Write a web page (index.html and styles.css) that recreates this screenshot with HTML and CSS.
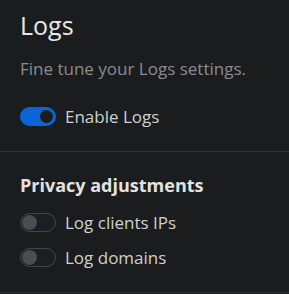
FILE: index.html
```html
<!DOCTYPE html>
<html lang="en">
<head>
    <meta charset="UTF-8">
    <meta name="viewport" content="width=device-width, initial-scale=1.0">
    <title>Logs</title>
    <link rel="stylesheet" href="styles.css">
</head>
<body>
    <div class="section">
        <h1>Logs</h1>
        <p class="sub">Fine tune your Logs settings.</p>
        <label class="row">
            <input type="checkbox" class="switch" checked>
            <span>Enable Logs</span>
        </label>
    </div>

    <div class="section second">
        <h2>Privacy adjustments</h2>
        <label class="row">
            <input type="checkbox" class="switch">
            <span>Log clients IPs</span>
        </label>
        <label class="row">
            <input type="checkbox" class="switch">
            <span>Log domains</span>
        </label>
    </div>
</body>
</html>
```

FILE: styles.css
```css
body {
    margin: 0;
    padding: 0;
    background: #1b1c1e;
    color: #d4d4d4;
    font-family: "Open Sans", "Noto Sans", sans-serif;
    font-size: 17px;
    overflow: hidden;
}

.section {
    padding: 10px 20px 22px;
    border-bottom: 1px solid #2f3033;
}

.section.second {
    padding-top: 22px;
    padding-bottom: 22px;
}

h1 {
    margin: 0;
    font-size: 25px;
    font-weight: 400;
    line-height: 30px;
    color: #e8e8e8;
}

h2 {
    margin: 0 0 15px;
    font-size: 18px;
    font-weight: 700;
    line-height: 22px;
    color: #e2e2e2;
}

.sub {
    margin: 17px 0 24px;
    line-height: 24px;
    color: #8b8c8e;
}

.row {
    display: flex;
    align-items: center;
    gap: 9px;
    line-height: 24px;
    color: #d0d0d0;
}

.row + .row {
    margin-top: 11px;
}

.switch {
    appearance: none;
    -webkit-appearance: none;
    margin: 0 0 2px;
    width: 36px;
    height: 19px;
    box-sizing: border-box;
    border-radius: 10px;
    border: 1px solid #45474a;
    background: #1d1e21;
    position: relative;
    cursor: pointer;
}

.switch::after {
    content: "";
    position: absolute;
    top: 1px;
    left: 1px;
    width: 15px;
    height: 15px;
    border-radius: 50%;
    background: #4b4d51;
}

.switch:checked {
    background: #0b64d8;
    border-color: #0b64d8;
}

.switch:checked::after {
    left: auto;
    right: 2px;
    top: 2px;
    width: 13px;
    height: 13px;
    background: #1b1c1e;
}
```
